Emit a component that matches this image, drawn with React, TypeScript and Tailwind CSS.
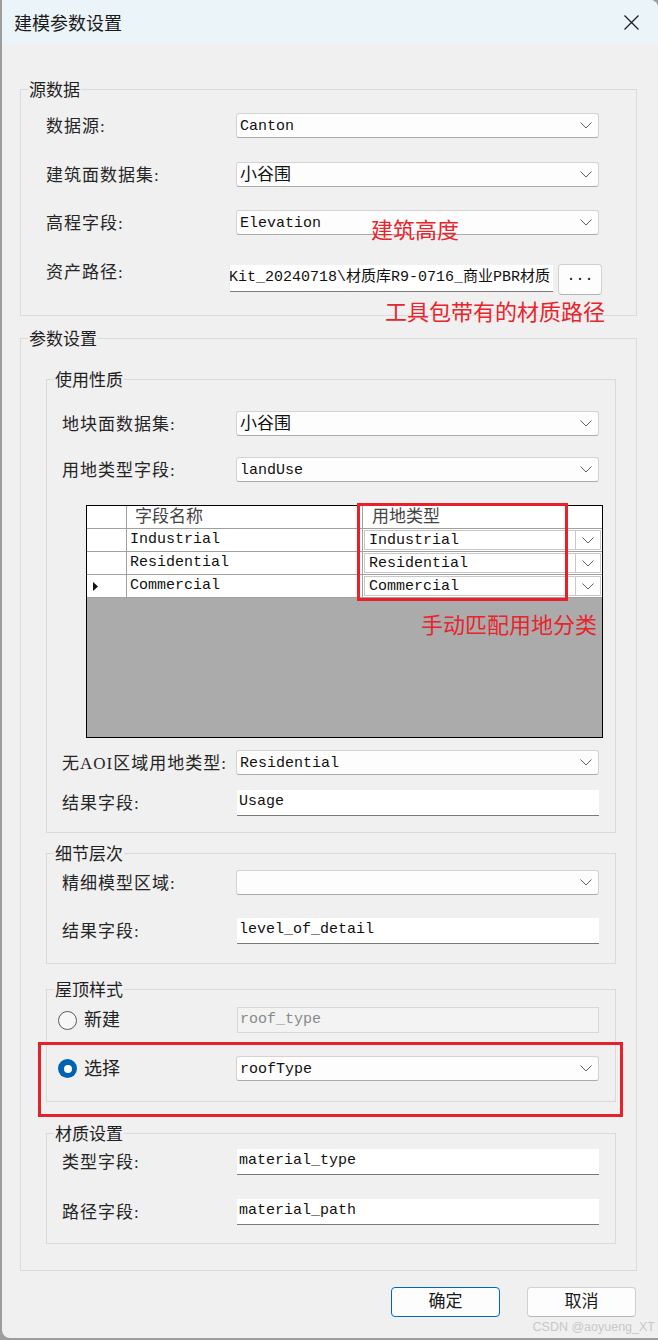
import clsx from "clsx";
import type { ReactNode } from "react";

const SERIF = "font-['Liberation_Serif','Noto_Sans_CJK_SC',serif]";
const MONO = "font-['Liberation_Mono','Noto_Sans_CJK_SC',monospace]";
const SANS = "font-['Noto_Sans_CJK_SC',sans-serif]";
const NOTE = "font-['Noto_Sans_CJK_SC',sans-serif] text-[22px] leading-[22px] text-[#e8242c] whitespace-nowrap";

function Chevron() {
  return (
    <svg width="12" height="7" viewBox="0 0 12 7" className="shrink-0">
      <path d="M0.5 0.5 L6 6 L11.5 0.5" fill="none" stroke="#606060" strokeWidth="1" />
    </svg>
  );
}

function Combo({ value, cjk }: { value?: string; cjk?: boolean }) {
  return (
    <div className="flex h-[25px] w-[363px] shrink-0 items-center rounded-[3px] border border-[#d3d3d3] border-b-[#ababab] bg-[#fdfdfd] pl-[3px] pr-[6px]">
      <span className={clsx(MONO, "flex-1 pt-[2px] leading-none text-[#111]", cjk ? "text-[17px]" : "text-[15px]")}>
        {value}
      </span>
      <Chevron />
    </div>
  );
}

function TextBox({ value }: { value: string }) {
  return (
    <div
      className={clsx(
        MONO,
        "ml-[1px] flex h-[26px] w-[362px] shrink-0 items-center border-b-[1.5px] border-[#7a7a7a] bg-white pl-[2px] text-[15px] text-[#111]"
      )}
    >
      {value}
    </div>
  );
}

function Row({
  label,
  labelW,
  className,
  children,
}: {
  label: string;
  labelW: string;
  className?: string;
  children: ReactNode;
}) {
  return (
    <div className={clsx("flex items-center", className)}>
      <span className={clsx(SERIF, "shrink-0 pt-[2px] text-[17px] leading-[20px] tracking-[1px] text-[#252525]", labelW)}>
        {label}
      </span>
      {children}
    </div>
  );
}

function Group({ title, className, children }: { title: string; className?: string; children: ReactNode }) {
  return (
    <fieldset className={clsx("border border-[#dadada]", className)}>
      <legend className={clsx(SANS, "ml-[7px] px-[1px] text-[17px] leading-[22px] text-[#1f1f1f]")}>{title}</legend>
      {children}
    </fieldset>
  );
}

function Radio({ checked }: { checked?: boolean }) {
  return checked ? (
    <span className="flex h-[19px] w-[19px] shrink-0 items-center justify-center rounded-full bg-[#0063b1]">
      <span className="h-[8px] w-[8px] rounded-full bg-white" />
    </span>
  ) : (
    <span className="h-[19px] w-[19px] shrink-0 rounded-full border border-[#5a5a5a] bg-[#f7f7f7]" />
  );
}

const rows = ["Industrial", "Residential", "Commercial"];

function MatchGrid() {
  return (
    <div className="relative ml-[39px] mt-[23px] h-[233px] w-[517px] border border-black bg-[#ababab]">
      <div className="flex h-[23px] border-b border-[#a0a0a0] bg-white">
        <div className="w-[40px] border-r border-[#a0a0a0]" />
        <div className={clsx(SERIF, "flex w-[236px] items-center border-r border-[#a0a0a0] pl-[8px] text-[17px] text-[#444]")}>
          字段名称
        </div>
        <div className={clsx(SERIF, "flex flex-1 items-center pl-[9px] text-[17px] text-[#444]")}>用地类型</div>
      </div>
      {rows.map((name, i) => (
        <div key={name} className="flex h-[23px] border-b border-[#a0a0a0] bg-white">
          <div className="flex w-[40px] items-center border-r border-[#a0a0a0] pl-[6px]">
            {i === 2 && (
              <svg width="5" height="9" viewBox="0 0 5 9">
                <path d="M0 0 L5 4.5 L0 9 Z" fill="#111" />
              </svg>
            )}
          </div>
          <div className={clsx(MONO, "flex w-[236px] items-center border-r border-[#a0a0a0] pl-[3px] text-[15px] text-[#111]")}>
            {name}
          </div>
          <div className="flex flex-1 p-[1px]">
            <div className="flex flex-1 border border-[#c8c8c8] bg-white">
              <div className={clsx(MONO, "flex flex-1 items-center border-r border-[#c8c8c8] pl-[4px] pt-[2px] text-[15px] text-[#111]")}>
                {name}
              </div>
              <div className="flex w-[24px] items-center justify-center">
                <Chevron />
              </div>
            </div>
          </div>
        </div>
      ))}
      <div className="absolute left-[270px] top-[-3px] h-[98px] w-[211px] border-[3px] border-[#e8202a]" />
      <span className={clsx(NOTE, "absolute left-[334px] top-[106px]")}>手动匹配用地分类</span>
    </div>
  );
}

export default function App() {
  return (
    <div className="h-[1340px] w-[658px] bg-[#9d9d9d] pb-[2px] pl-[2px]">
      <div className="relative flex h-full flex-col overflow-hidden rounded-bl-[8px] rounded-tr-[8px] bg-[#f0f0f0]">
        <div className="flex h-[44px] shrink-0 items-center justify-between bg-[#ebf4f8] pl-[12px] pr-[19px]">
          <span className={clsx(SANS, "text-[18px] text-[#1a1a1a]")}>建模参数设置</span>
          <svg width="15" height="15" viewBox="0 0 15 15">
            <path d="M0.5 0.5 L14.5 14.5 M14.5 0.5 L0.5 14.5" stroke="#1a1a1a" strokeWidth="1.2" />
          </svg>
        </div>

        <div className="pl-[18px] pr-[21px] pt-[34px]">
          <Group title="源数据">
            <div className="pb-[20px] pl-[25px] pt-[13px]">
              <Row label="数据源:" labelW="w-[190px]">
                <Combo value="Canton" />
              </Row>
              <Row label="建筑面数据集:" labelW="w-[190px]" className="mt-[24px]">
                <Combo value="小谷围" cjk />
              </Row>
              <Row label="高程字段:" labelW="w-[190px]" className="relative mt-[23px]">
                <Combo value="Elevation" />
                <span className={clsx(NOTE, "absolute left-[325px] top-[7px]")}>建筑高度</span>
              </Row>
              <div className="relative mt-[29px] flex items-start">
                <span className={clsx(SERIF, "mt-[-1px] w-[184px] shrink-0 text-[17px] leading-[20px] tracking-[1px] text-[#252525]")}>
                  资产路径:
                </span>
                <div
                  className={clsx(
                    MONO,
                    "mt-[1px] flex h-[27px] w-[323px] shrink-0 items-center justify-end overflow-hidden whitespace-nowrap border-b-[1.5px] border-[#7a7a7a] bg-white pr-[3px] text-[15px] text-[#111]"
                  )}
                >
                  D:\Data\CityModelKit_20240718\材质库R9-0716_商业PBR材质
                </div>
                <div className={clsx(MONO, "ml-[5px] flex h-[31px] w-[44px] shrink-0 items-center justify-center rounded-[4px] border border-[#d0d0d0] border-b-[#b5b5b5] bg-[#fdfdfd] pb-[4px] text-[15px] text-[#111]")}>
                  ...
                </div>
                <span className={clsx(NOTE, "absolute left-[339px] top-[35px]")}>工具包带有的材质路径</span>
              </div>
            </div>
          </Group>

          <Group title="参数设置" className="mt-[11px]">
            <div className="pb-[26px] pl-[25px] pr-[20px] pt-[19px]">
              <Group title="使用性质">
                <div className="pb-[16px] pt-[21px]">
                  <Row label="地块面数据集:" labelW="w-[174px]" className="pl-[15px]">
                    <Combo value="小谷围" cjk />
                  </Row>
                  <Row label="用地类型字段:" labelW="w-[174px]" className="mt-[21px] pl-[15px]">
                    <Combo value="landUse" />
                  </Row>
                  <MatchGrid />
                  <Row label="无AOI区域用地类型:" labelW="w-[174px]" className="mt-[12px] pl-[15px]">
                    <Combo value="Residential" />
                  </Row>
                  <Row label="结果字段:" labelW="w-[174px]" className="mt-[15px] pl-[15px]">
                    <TextBox value="Usage" />
                  </Row>
                </div>
              </Group>

              <Group title="细节层次" className="mt-[9px]">
                <div className="pb-[19px] pl-[15px] pt-[6px]">
                  <Row label="精细模型区域:" labelW="w-[174px]">
                    <Combo />
                  </Row>
                  <Row label="结果字段:" labelW="w-[174px]" className="mt-[23px]">
                    <TextBox value="level_of_detail" />
                  </Row>
                </div>
              </Group>

              <Group title="屋顶样式" className="mt-[14px]">
                <div className="pb-[20px] pl-[11px] pt-[7px]">
                  <div className="flex h-[26px] items-center">
                    <div className="flex w-[179px] shrink-0 items-center gap-[7px]">
                      <Radio />
                      <span className={clsx(SERIF, "text-[18px] leading-[20px] text-[#222]")}>新建</span>
                    </div>
                    <div className={clsx(MONO, "flex h-[26px] w-[362px] items-center border border-[#d8d8d8] bg-[#f3f3f3] pl-[2px] text-[15px] text-[#8a8a8a]")}>
                      roof_type
                    </div>
                  </div>
                  <div className="relative mt-[23px] flex items-center">
                    <div className="flex w-[178px] shrink-0 items-center gap-[7px]">
                      <Radio checked />
                      <span className={clsx(SERIF, "text-[18px] leading-[20px] text-[#222]")}>选择</span>
                    </div>
                    <Combo value="roofType" />
                    <div className="absolute left-[-20px] top-[-14px] h-[75px] w-[585px] border-[3px] border-[#e8202a]" />
                  </div>
                </div>
              </Group>

              <Group title="材质设置" className="mt-[20px]">
                <div className="pb-[18px] pl-[15px] pt-[5px]">
                  <Row label="类型字段:" labelW="w-[174px]">
                    <TextBox value="material_type" />
                  </Row>
                  <Row label="路径字段:" labelW="w-[174px]" className="mt-[24px]">
                    <TextBox value="material_path" />
                  </Row>
                </div>
              </Group>
            </div>
          </Group>

          <div className="mt-[16px] flex justify-end gap-[27px] pr-[1px]">
            <button className={clsx(SERIF, "h-[30px] w-[109px] rounded-[4px] border border-[#0067c0] bg-[#fdfdfd] text-[17px] text-[#1a1a1a]")}>
              确定
            </button>
            <button className={clsx(SERIF, "h-[30px] w-[109px] rounded-[4px] border border-[#d0d0d0] border-b-[#b8b8b8] bg-[#fdfdfd] text-[17px] text-[#1a1a1a]")}>
              取消
            </button>
          </div>
        </div>

        <span className="absolute bottom-[4px] right-[3px] font-['Liberation_Sans',sans-serif] text-[12.5px] leading-[14px] text-[#c8c8c8]">
          CSDN @aoyueng_XT
        </span>
      </div>
    </div>
  );
}
